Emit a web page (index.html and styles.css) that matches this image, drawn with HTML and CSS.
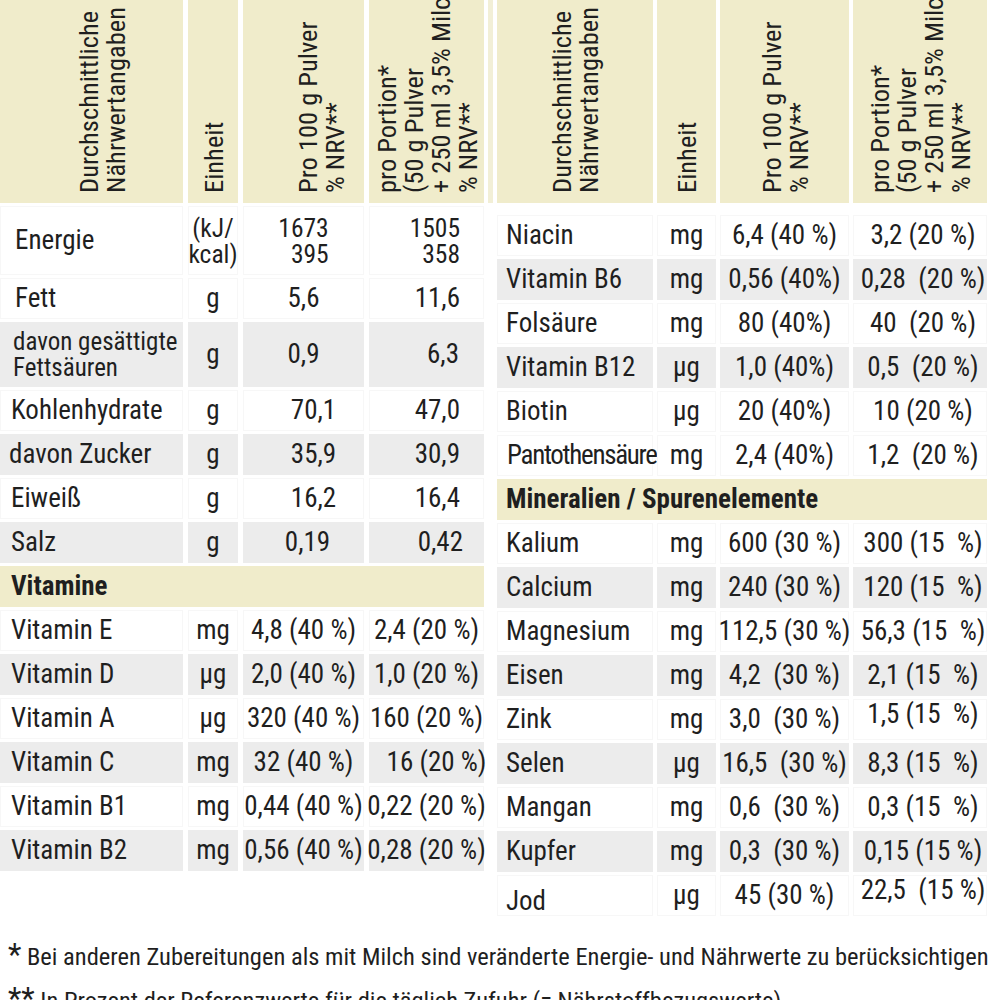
FILE: index.html
```html
<!DOCTYPE html>
<html lang="de">
<head>
<meta charset="utf-8">
<title>Nährwertangaben</title>
<link rel="stylesheet" href="styles.css">
</head>
<body>
<div class="page">
  <div class="tables">
    <div class="tbl tbl-left">
      <div class="row head">
        <div class="hc hc-name"><div class="vt">Durchschnittliche<br>Nährwertangaben</div></div>
        <div class="hc"><div class="vt">Einheit</div></div>
        <div class="hc hc-v3"><div class="vt">Pro 100 g Pulver<br>% NRV**</div></div>
        <div class="hc"><div class="vt">pro Portion*<br>(50 g Pulver<br>+ 250 ml 3,5% Milch)<br>% NRV**</div></div>
      </div>
      <div class="row tall">
        <div class="c n p15">Energie</div>
        <div class="c u"><span class="stack">(kJ/<br>kcal)</span></div>
        <div class="c v"><span class="stack">1673<br>395</span></div>
        <div class="c v r"><span class="stack">1505<br>358</span></div>
      </div>
      <div class="row">
        <div class="c n p15">Fett</div>
        <div class="c u">g</div>
        <div class="c v">5,6</div>
        <div class="c v r">11,6</div>
      </div>
      <div class="row grey mid">
        <div class="c n p13"><span class="stack2">davon gesättigte<br>Fettsäuren</span></div>
        <div class="c u">g</div>
        <div class="c v">0,9</div>
        <div class="c v r rr">6,3</div>
      </div>
      <div class="row">
        <div class="c n">Kohlenhydrate</div>
        <div class="c u">g</div>
        <div class="c v sh">70,1</div>
        <div class="c v r">47,0</div>
      </div>
      <div class="row grey">
        <div class="c n p9">davon Zucker</div>
        <div class="c u">g</div>
        <div class="c v sh">35,9</div>
        <div class="c v r">30,9</div>
      </div>
      <div class="row">
        <div class="c n">Eiweiß</div>
        <div class="c u">g</div>
        <div class="c v sh">16,2</div>
        <div class="c v r">16,4</div>
      </div>
      <div class="row grey">
        <div class="c n">Salz</div>
        <div class="c u">g</div>
        <div class="c v sh2">0,19</div>
        <div class="c v r rr2">0,42</div>
      </div>
      <div class="row sec">
        <div class="c n bold">Vitamine</div>
      </div>
      <div class="row">
        <div class="c n">Vitamin E</div>
        <div class="c u">mg</div>
        <div class="c v">4,8 (40 %)</div>
        <div class="c v">2,4 (20 %)</div>
      </div>
      <div class="row grey">
        <div class="c n">Vitamin D</div>
        <div class="c u">µg</div>
        <div class="c v">2,0 (40 %)</div>
        <div class="c v">1,0 (20 %)</div>
      </div>
      <div class="row">
        <div class="c n">Vitamin A</div>
        <div class="c u">µg</div>
        <div class="c v">320 (40 %)</div>
        <div class="c v">160 (20 %)</div>
      </div>
      <div class="row grey">
        <div class="c n">Vitamin C</div>
        <div class="c u">mg</div>
        <div class="c v">32 (40 %)</div>
        <div class="c v sh">16 (20 %)</div>
      </div>
      <div class="row">
        <div class="c n">Vitamin B1</div>
        <div class="c u">mg</div>
        <div class="c v">0,44 (40 %)</div>
        <div class="c v">0,22 (20 %)</div>
      </div>
      <div class="row grey">
        <div class="c n">Vitamin B2</div>
        <div class="c u">mg</div>
        <div class="c v">0,56 (40 %)</div>
        <div class="c v">0,28 (20 %)</div>
      </div>
    </div>

    <div class="strip"></div>

    <div class="tbl tbl-right">
      <div class="row head">
        <div class="hc"><div class="vt">Durchschnittliche<br>Nährwertangaben</div></div>
        <div class="hc"><div class="vt">Einheit</div></div>
        <div class="hc"><div class="vt">Pro 100 g Pulver<br>% NRV**</div></div>
        <div class="hc"><div class="vt">pro Portion*<br>(50 g Pulver<br>+ 250 ml 3,5% Milch)<br>% NRV**</div></div>
      </div>
      <div class="row first">
        <div class="c n">Niacin</div>
        <div class="c u">mg</div>
        <div class="c v">6,4 (40 %)</div>
        <div class="c v">3,2 (20 %)</div>
      </div>
      <div class="row grey">
        <div class="c n">Vitamin B6</div>
        <div class="c u">mg</div>
        <div class="c v">0,56 (40%)</div>
        <div class="c v">0,28  (20 %)</div>
      </div>
      <div class="row">
        <div class="c n">Folsäure</div>
        <div class="c u">mg</div>
        <div class="c v">80 (40%)</div>
        <div class="c v">40  (20 %)</div>
      </div>
      <div class="row grey">
        <div class="c n">Vitamin B12</div>
        <div class="c u">µg</div>
        <div class="c v">1,0 (40%)</div>
        <div class="c v">0,5  (20 %)</div>
      </div>
      <div class="row">
        <div class="c n">Biotin</div>
        <div class="c u">µg</div>
        <div class="c v">20 (40%)</div>
        <div class="c v">10 (20 %)</div>
      </div>
      <div class="row">
        <div class="c n tight">Pantothensäure</div>
        <div class="c u">mg</div>
        <div class="c v">2,4 (40%)</div>
        <div class="c v">1,2  (20 %)</div>
      </div>
      <div class="row sec">
        <div class="c n bold">Mineralien / Spurenelemente</div>
      </div>
      <div class="row">
        <div class="c n">Kalium</div>
        <div class="c u">mg</div>
        <div class="c v">600 (30 %)</div>
        <div class="c v">300 (15  %)</div>
      </div>
      <div class="row grey">
        <div class="c n">Calcium</div>
        <div class="c u">mg</div>
        <div class="c v">240 (30 %)</div>
        <div class="c v">120 (15  %)</div>
      </div>
      <div class="row">
        <div class="c n">Magnesium</div>
        <div class="c u">mg</div>
        <div class="c v">112,5 (30 %)</div>
        <div class="c v">56,3 (15  %)</div>
      </div>
      <div class="row grey">
        <div class="c n">Eisen</div>
        <div class="c u">mg</div>
        <div class="c v">4,2  (30 %)</div>
        <div class="c v">2,1 (15  %)</div>
      </div>
      <div class="row">
        <div class="c n">Zink</div>
        <div class="c u">mg</div>
        <div class="c v">3,0  (30 %)</div>
        <div class="c v up">1,5 (15  %)</div>
      </div>
      <div class="row grey">
        <div class="c n">Selen</div>
        <div class="c u">µg</div>
        <div class="c v">16,5  (30 %)</div>
        <div class="c v">8,3 (15  %)</div>
      </div>
      <div class="row">
        <div class="c n">Mangan</div>
        <div class="c u">mg</div>
        <div class="c v">0,6  (30 %)</div>
        <div class="c v">0,3 (15  %)</div>
      </div>
      <div class="row grey">
        <div class="c n">Kupfer</div>
        <div class="c u">mg</div>
        <div class="c v">0,3  (30 %)</div>
        <div class="c v">0,15 (15 %)</div>
      </div>
      <div class="row">
        <div class="c n down">Jod</div>
        <div class="c u">µg</div>
        <div class="c v">45 (30 %)</div>
        <div class="c v up">22,5  (15 %)</div>
      </div>
    </div>
  </div>

  <div class="notes">
    <p class="note"><span class="ast">*</span> Bei anderen Zubereitungen als mit Milch sind veränderte Energie- und Nährwerte zu berücksichtigen</p>
    <p class="note"><span class="ast">**</span> In Prozent der Referenzwerte für die täglich Zufuhr (= Nährstoffbezugswerte)</p>
  </div>
</div>
</body>
</html>
```
FILE: styles.css
```css
* { box-sizing: border-box; }

html, body {
  margin: 0;
  padding: 0;
  background: #ffffff;
}

body {
  font-family: "Roboto Condensed", Roboto, "Liberation Sans", sans-serif;
  font-stretch: 75%;
  color: #1f1f1f;
  font-size: 27px;
  overflow: hidden;
}

.page {
  width: 1000px;
  height: 1000px;
  overflow: hidden;
}

.tables {
  display: flex;
  align-items: flex-start;
  gap: 4px;
}

.tbl {
  display: flex;
  flex-direction: column;
  gap: 3px;
}

.row {
  display: grid;
  grid-template-rows: 100%;
  column-gap: 5px;
  height: 41px;
}

.tbl-left .row {
  grid-template-columns: 183px 50px 121px 115px;
}

.tbl-right .row {
  grid-template-columns: 156px 59px 129px 134px;
  column-gap: 4px;
}

.row.head { height: 203px; grid-template-rows: 203px; }
.row.tall { height: 69px; }
.row.mid { height: 65px; }
.tbl-right .row.first { margin-top: 9px; }

.row.sec {
  display: flex;
  background: #f0eccb;
}

/* header cells */
.hc {
  background: #f0eccb;
  display: flex;
  justify-content: center;
  align-items: flex-start;
  height: 203px;
  min-height: 0;
  overflow: hidden;
}

.hc-name { padding-left: 20px; }
.hc-v3 { padding-left: 34px; }

.vt {
  writing-mode: vertical-rl;
  transform: rotate(180deg);
  white-space: nowrap;
  height: 193px;
  font-size: 26.5px;
  line-height: 27px;
}

.strip {
  width: 5px;
  height: 203px;
  background: #f2efd6;
}

/* body cells */
.c {
  display: flex;
  align-items: center;
  background: #ffffff;
  box-shadow: inset 0 0 0 1px #f7f7f7;
  white-space: pre;
  line-height: 1;
  min-height: 0;
}

.grey .c { background: #ececec; box-shadow: none; }
.sec .c { background: transparent; box-shadow: none; }

.n { padding-left: 11px; }
.tbl-right .n { padding-left: 9px; }
.n.p15 { padding-left: 15px; }
.n.p13 { padding-left: 13px; }
.n.p9 { padding-left: 9px; }
.n.tight { letter-spacing: -1.3px; padding-left: 10px; }
.n.down { padding-top: 12px; }
.bold { font-weight: 700; }

.u { justify-content: center; }
.v { justify-content: center; }
.tbl-right .c.v:last-child { padding-left: 6px; }
.v.r { justify-content: flex-end; padding-right: 24px; }
.v.rr { padding-right: 25px; }
.v.rr2 { padding-right: 21px; }
.v.sh { padding-left: 20px; }
.v.sh2 { padding-left: 8px; }
.v.up { padding-bottom: 11px; }

.stack {
  display: block;
  text-align: right;
  font-size: 25.5px;
  line-height: 26px;
}

.u .stack { text-align: center; }

.stack2 {
  display: block;
  font-size: 25px;
  line-height: 26px;
}

/* notes */
.notes {
  padding: 19px 0 0 8px;
}

.note {
  margin: 0;
  font-size: 24.5px;
  line-height: 44px;
  white-space: nowrap;
}

.ast {
  font-size: 31px;
  line-height: 0;
}
```
